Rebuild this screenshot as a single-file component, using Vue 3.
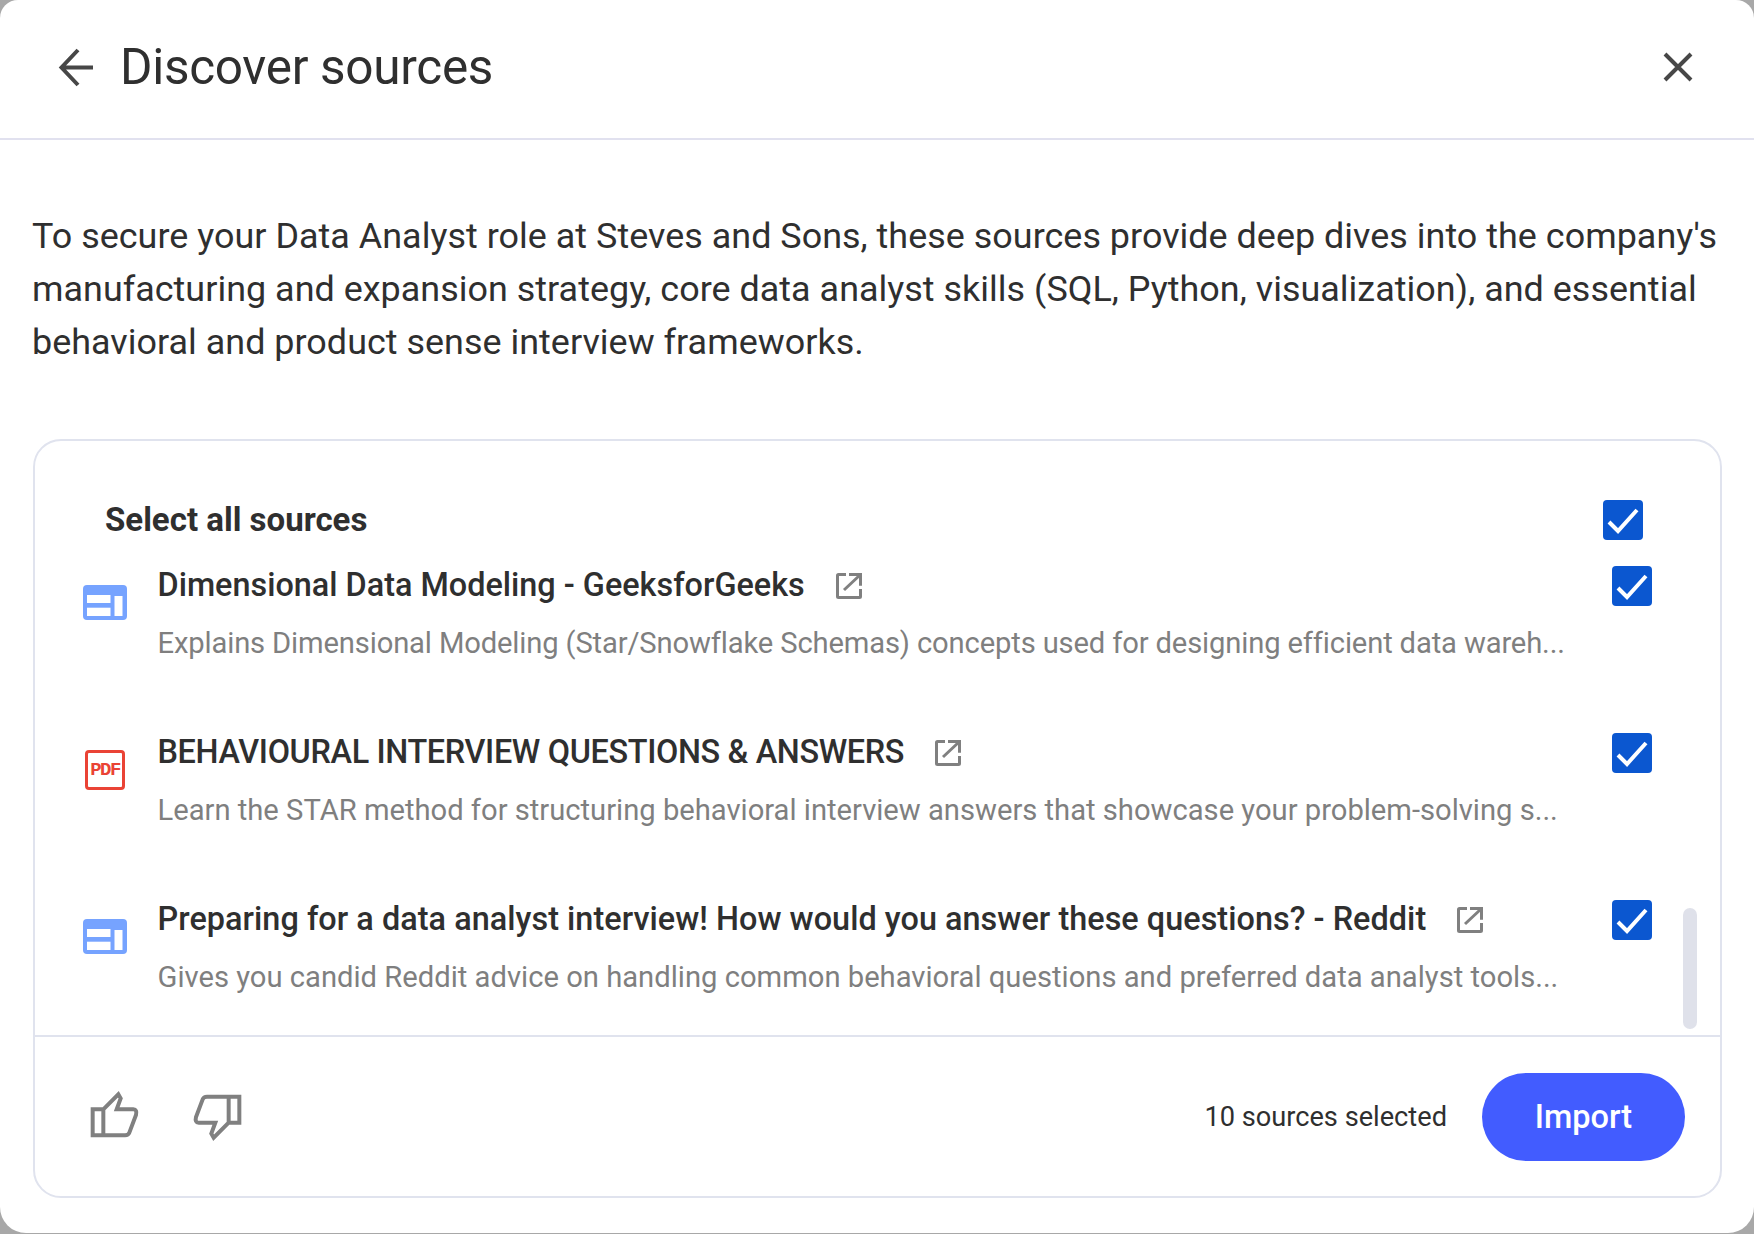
<script setup>
const sources = [
  { title: 'Dimensional Data Modeling - GeeksforGeeks', desc: 'Explains Dimensional Modeling (Star/Snowflake Schemas) concepts used for designing efficient data wareh...', type: 'web', titleLs: 0, descLs: -0.15 },
  { title: 'BEHAVIOURAL INTERVIEW QUESTIONS & ANSWERS', desc: 'Learn the STAR method for structuring behavioral interview answers that showcase your problem-solving s...', type: 'pdf', titleLs: -0.35, descLs: -0.01 },
  { title: 'Preparing for a data analyst interview! How would you answer these questions? - Reddit', desc: 'Gives you candid Reddit advice on handling common behavioral questions and preferred data analyst tools...', type: 'web', titleLs: 0.04, descLs: 0 },
]
const thumb = 'M40 55L85 10L92 22L80 55H130Q142 55 138 72L118 125Q115 133 105 133H8V55H40V133'
</script>

<template>
  <div class="modal">
    <header class="head">
      <svg class="back" width="37" height="41" viewBox="0 0 37 41"><path d="M35 20.5H4M20 3L3.5 20.5L20 38" /></svg>
      <h1 class="title">Discover sources</h1>
      <svg class="close" width="32" height="32" viewBox="0 0 32 32"><path d="M3 3L29 29M29 3L3 29" /></svg>
    </header>

    <p class="intro">To secure your Data Analyst role at Steves and Sons, these sources provide deep dives into the company's manufacturing and expansion strategy, core data analyst skills (SQL, Python, visualization), and essential behavioral and product sense interview frameworks.</p>

    <section class="card">
      <div class="select-all">
        <span class="select-label">Select all sources</span>
        <span class="check"><svg width="40" height="40" viewBox="0 0 40 40"><path d="M6 22L15 31L34 10" /></svg></span>
      </div>

      <div class="list">
        <article v-for="s in sources" :key="s.title" class="row">
          <svg v-if="s.type === 'web'" class="icon-web" width="44" height="35" viewBox="0 0 44 35">
            <rect width="44" height="35" rx="4" fill="#76a3ff" />
            <rect x="4" y="10" width="23.5" height="8" fill="#fff" />
            <rect x="4" y="22.7" width="23.5" height="8.3" fill="#fff" />
            <rect x="31.5" y="11" width="8" height="20" fill="#fff" />
          </svg>
          <div v-else class="icon-pdf"><span>PDF</span></div>
          <div class="body">
            <div class="row-title">
              <span :style="{ letterSpacing: s.titleLs + 'px' }">{{ s.title }}</span>
              <svg class="ext" width="26" height="26" viewBox="0 0 26 26"><path d="M10 1.5H2.5Q1.5 1.5 1.5 2.5V23.5Q1.5 24.5 2.5 24.5H23.5Q24.5 24.5 24.5 23.5V16M8 17L24 2M13 1.5H24.5V12.7" /></svg>
            </div>
            <div class="row-desc" :style="{ letterSpacing: s.descLs + 'px' }">{{ s.desc }}</div>
          </div>
          <span class="check row-check"><svg width="40" height="40" viewBox="0 0 40 40"><path d="M6 22L15 31L34 10" /></svg></span>
        </article>
        <div class="thumb-bar"></div>
      </div>

      <footer class="foot">
        <svg class="fb" width="50" height="50" viewBox="0 0 150 150"><path :d="thumb" /></svg>
        <svg class="fb down" width="50" height="50" viewBox="0 0 150 150"><path :d="thumb" /></svg>
        <span class="count">10 sources selected</span>
        <button class="import">Import</button>
      </footer>
    </section>
  </div>
</template>

<style>
html, body { background: #a8a8a8; }
</style>

<style scoped>
.modal {
  width: 1754px;
  height: 1233px;
  background: #fff;
  border-radius: 18px 18px 26px 26px;
  display: flex;
  flex-direction: column;
  font-family: Roboto, "Liberation Sans", sans-serif;
  color: #2f2f2f;
  overflow: hidden;
}
.head {
  flex: none;
  border-bottom: 2px solid #e1e1ef;
  display: flex;
  align-items: center;
  padding: 0 60px 4px 58px;
  box-sizing: border-box;
  height: 140px;
}
.back { margin-right: 25px; }
.back path, .close path { fill: none; stroke: #474747; stroke-width: 4; }
.title { font-size: 49.5px; font-weight: 400; margin: 0; flex: 1; letter-spacing: -0.3px; }
.intro {
  margin: 70px 16px 70px 32px;
  font-size: 35.9px;
  line-height: 53px;
  letter-spacing: 0.03px;
}
.card {
  flex: 1;
  min-height: 0;
  margin: 0 32px 35px 33px;
  border: 2px solid #e0e3ee;
  border-radius: 28px;
  display: flex;
  flex-direction: column;
}
.select-all {
  flex: none;
  display: flex;
  justify-content: space-between;
  align-items: center;
  padding: 59px 77px 20px 70px;
}
.select-label { font-size: 33px; font-weight: 700; line-height: 40px; }
.check {
  width: 40px;
  height: 40px;
  flex: none;
  border-radius: 4px;
  background: #0b57d0;
  display: block;
}
.check svg { display: block; }
.check path { fill: none; stroke: #fff; stroke-width: 4; }
.list { flex: 1; min-height: 0; overflow: hidden; position: relative; }
.row {
  height: 167px;
  display: flex;
  align-items: flex-start;
  padding: 0 68px 0 48px;
  box-sizing: border-box;
}
.icon-web { margin: 25px 30.5px 0 0; flex: none; }
.icon-pdf {
  width: 40px;
  height: 40px;
  margin: 23px 32.5px 0 2px;
  flex: none;
  box-sizing: border-box;
  border: 3.6px solid #ea4335;
  border-radius: 4px;
  display: flex;
  align-items: center;
  justify-content: center;
  color: #ea4335;
  font: 700 19px "Liberation Mono", monospace;
  letter-spacing: -1.5px;
}
.body { flex: 1; min-width: 0; }
.row-title {
  display: flex;
  align-items: center;
  gap: 31px;
  font-size: 32.4px;
  font-weight: 500;
  line-height: 51px;
  white-space: nowrap;
}
.ext { flex: none; }
.ext path { fill: none; stroke: #808080; stroke-width: 3; }
.row-desc {
  margin-top: 11px;
  font-size: 29.2px;
  line-height: 42px;
  color: #7f7f7f;
  white-space: nowrap;
}
.row-check { margin-top: 6px; }
.thumb-bar {
  position: absolute;
  right: 23px;
  top: 348px;
  width: 14px;
  height: 121px;
  border-radius: 7px;
  background: #dfe1ea;
}
.foot {
  flex: none;
  border-top: 2px solid #e0e3ee;
  display: flex;
  align-items: center;
  height: 161px;
  box-sizing: border-box;
  padding: 1px 35px 0 55px;
}
.fb { flex: none; margin-top: -3px; }
.fb path { fill: none; stroke: #808080; stroke-width: 12; }
.down { transform: rotate(180deg); margin-left: 52px; }
.count { margin-left: auto; font-size: 27.2px; color: #2f2f2f; }
.import {
  margin-left: 35px;
  width: 203px;
  height: 88px;
  border: 0;
  border-radius: 44px;
  background: #425cff;
  color: #fff;
  font: 500 32.5px Roboto, sans-serif;
}
</style>
